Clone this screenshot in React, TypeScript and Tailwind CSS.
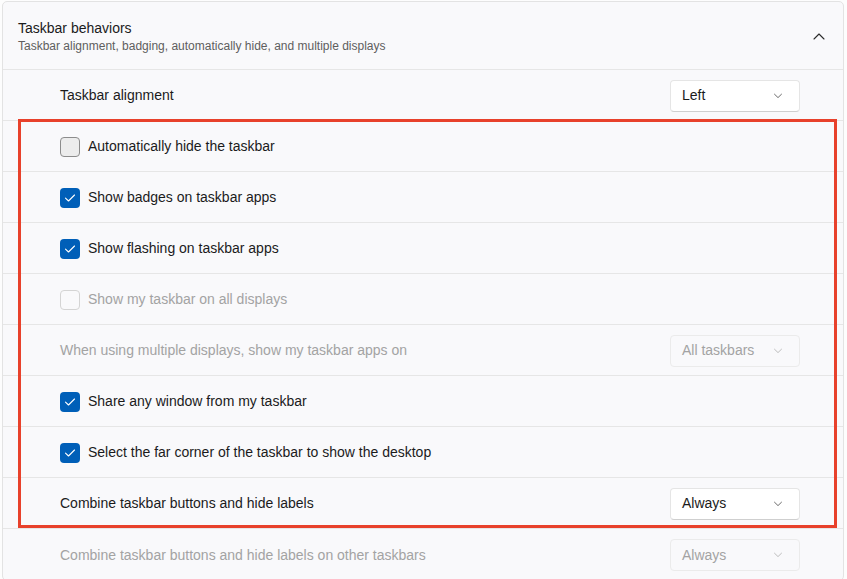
import React from "react";

const font = { fontFamily: '"Segoe UI", "Liberation Sans", Arial, sans-serif' };

function Chevron({ disabled }: { disabled?: boolean }) {
  return (
    <svg width="10" height="6" viewBox="0 0 10 6" className="mr-[1px] shrink-0">
      <path d="M1.5 1.2 L5 4.6 L8.5 1.2" fill="none" stroke={disabled ? "#bdbdbd" : "#6b6b6b"} strokeWidth="1" strokeLinecap="round" strokeLinejoin="round" />
    </svg>
  );
}

function Dropdown({ value, disabled }: { value: string; disabled?: boolean }) {
  return (
    <div
      className={
        "flex h-[32px] w-[130px] items-center justify-between rounded-[4px] border pl-[11px] pr-[15px] text-[14px] " +
        (disabled
          ? "border-[#ebebeb] bg-[#f9f9fb] text-[#a3a3a3]"
          : "border-[#e5e5e5] border-b-[#cfcfcf] bg-white text-[#1b1b1b]")
      }
    >
      <span>{value}</span>
      <Chevron disabled={disabled} />
    </div>
  );
}

function Checkbox({ state }: { state: "checked" | "unchecked" | "disabled" }) {
  if (state === "checked") {
    return (
      <div className="flex h-[20px] w-[20px] shrink-0 items-center justify-center rounded-[4px] bg-[#005fb8]">
        <svg width="12" height="10" viewBox="0 0 12 10">
          <path d="M1.5 5.2 L4.5 8 L10.5 2" fill="none" stroke="white" strokeWidth="1.1" strokeLinecap="round" strokeLinejoin="round" />
        </svg>
      </div>
    );
  }
  if (state === "unchecked") {
    return <div className="h-[20px] w-[20px] shrink-0 rounded-[4px] border border-[#8c8c8c] bg-[#ececec]" />;
  }
  return <div className="h-[20px] w-[20px] shrink-0 rounded-[4px] border border-[#d4d4d4] bg-[#f9f9fb]" />;
}

function Row({ children, last }: { children: React.ReactNode; last?: boolean }) {
  return (
    <div className={"flex h-[51px] items-center justify-between pl-[57px] pr-[43px] pt-[1px] " + (last ? "" : "border-b border-[#e6e6e6]")}>
      {children}
    </div>
  );
}

function CheckRow({ label, state }: { label: string; state: "checked" | "unchecked" | "disabled" }) {
  return (
    <Row>
      <div className="flex items-center gap-[8px]">
        <Checkbox state={state} />
        <span className={"text-[14px] " + (state === "disabled" ? "text-[#a3a3a3]" : "text-[#1b1b1b]")}>{label}</span>
      </div>
    </Row>
  );
}

export default function App() {
  return (
    <div className="relative h-[579px] w-[847px] overflow-hidden bg-[#fdfdfd]" style={font}>
      <div className="ml-[2px] mt-[1px] w-[842px] overflow-hidden rounded-[5px] border border-[#e3e3e3] bg-[#f9f9fb]">
        <div className="flex h-[68px] items-center justify-between border-b border-[#e6e6e6] pl-[15px] pr-[18px]">
          <div className="flex flex-col pt-[1px]">
            <span className="text-[14px] leading-[19px] text-[#1b1b1b]">Taskbar behaviors</span>
            <span className="text-[12px] leading-[16px] text-[#5e5e5e]">Taskbar alignment, badging, automatically hide, and multiple displays</span>
          </div>
          <svg width="12" height="7" viewBox="0 0 12 7" className="mt-[2px]">
            <path d="M1 6 L6 1 L11 6" fill="none" stroke="#2b2b2b" strokeWidth="1.1" strokeLinecap="round" strokeLinejoin="round" />
          </svg>
        </div>
        <Row>
          <span className="text-[14px] text-[#1b1b1b]">Taskbar alignment</span>
          <Dropdown value="Left" />
        </Row>
        <CheckRow label="Automatically hide the taskbar" state="unchecked" />
        <CheckRow label="Show badges on taskbar apps" state="checked" />
        <CheckRow label="Show flashing on taskbar apps" state="checked" />
        <CheckRow label="Show my taskbar on all displays" state="disabled" />
        <Row>
          <span className="text-[14px] text-[#a3a3a3]">When using multiple displays, show my taskbar apps on</span>
          <Dropdown value="All taskbars" disabled />
        </Row>
        <CheckRow label="Share any window from my taskbar" state="checked" />
        <CheckRow label="Select the far corner of the taskbar to show the desktop" state="checked" />
        <Row>
          <span className="text-[14px] text-[#1b1b1b]">Combine taskbar buttons and hide labels</span>
          <Dropdown value="Always" />
        </Row>
        <Row last>
          <span className="text-[14px] text-[#a3a3a3]">Combine taskbar buttons and hide labels on other taskbars</span>
          <Dropdown value="Always" disabled />
        </Row>
      </div>
      <div className="pointer-events-none absolute left-[18px] top-[119px] h-[409px] w-[819px] border-[3.5px] border-[#e8412b]" />
    </div>
  );
}
